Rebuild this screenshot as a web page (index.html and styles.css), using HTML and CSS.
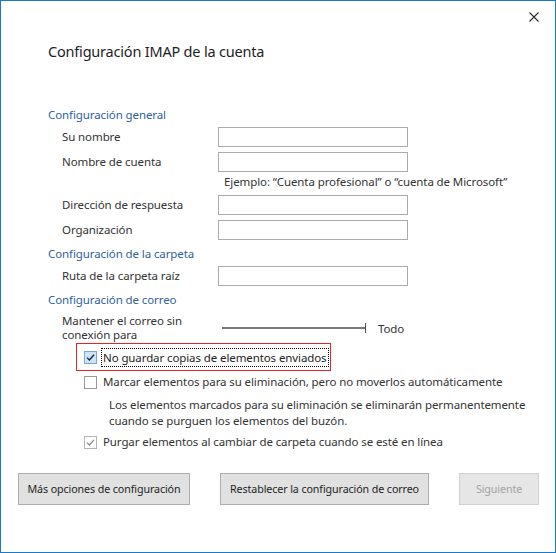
FILE: index.html
```html
<!DOCTYPE html>
<html lang="es">
<head>
<meta charset="utf-8">
<title>Configuración IMAP de la cuenta</title>
<link rel="stylesheet" href="styles.css">
</head>
<body>
<div class="dialog">
  <div class="titlebar">
    <button class="close" aria-label="Cerrar">
      <svg width="10" height="10" viewBox="0 0 10 10"><path d="M0.5 0.5L9.5 9.5M9.5 0.5L0.5 9.5" stroke="#2b2b2b" stroke-width="1.1" fill="none"/></svg>
    </button>
  </div>
  <h1 class="title">Configuración IMAP de la cuenta</h1>

  <h2 class="section-head h-general">Configuración general</h2>
  <div class="row first"><label class="row-label">Su nombre</label><input class="field" type="text"></div>
  <div class="row"><label class="row-label">Nombre de cuenta</label><input class="field" type="text"></div>
  <p class="hint">Ejemplo: “Cuenta profesional” o “cuenta de Microsoft”</p>
  <div class="row row-after-hint"><label class="row-label">Dirección de respuesta</label><input class="field" type="text"></div>
  <div class="row"><label class="row-label">Organización</label><input class="field" type="text"></div>

  <h2 class="section-head h-next">Configuración de la carpeta</h2>
  <div class="row first"><label class="row-label">Ruta de la carpeta raíz</label><input class="field" type="text"></div>

  <h2 class="section-head h-next">Configuración de correo</h2>
  <div class="offline">
    <div class="offline-label">Mantener el correo sin<br>conexión para</div>
    <div class="slider"><span class="track"></span><span class="tick"></span><span class="slider-value">Todo</span></div>
  </div>

  <div class="highlight">
    <span class="cb cb-focus">
      <svg width="11" height="11" viewBox="0 0 11 11"><path d="M2 5.6L4.4 8L9 2.8" stroke="#222" stroke-width="1.3" fill="none"/></svg>
    </span>
    <span class="focus-label">No guardar copias de elementos enviados</span>
  </div>

  <div class="check-row cr-mark">
    <span class="cb"></span>
    <span class="check-text">Marcar elementos para su eliminación, pero no moverlos automáticamente</span>
  </div>
  <p class="desc">Los elementos marcados para su eliminación se eliminarán permanentemente<br>cuando se purguen los elementos del buzón.</p>
  <div class="check-row cr-purge">
    <span class="cb cb-gray">
      <svg width="11" height="11" viewBox="0 0 11 11"><path d="M2 5.6L4.4 8L9 2.8" stroke="#8a8a8a" stroke-width="1.2" fill="none"/></svg>
    </span>
    <span class="check-text">Purgar elementos al cambiar de carpeta cuando se esté en línea</span>
  </div>

  <div class="actions">
    <button class="btn btn-more">Más opciones de configuración</button>
    <button class="btn btn-reset">Restablecer la configuración de correo</button>
    <button class="btn btn-next" disabled>Siguiente</button>
  </div>
</div>
</body>
</html>
```

FILE: styles.css
```css
* { box-sizing: border-box; }
html, body { margin: 0; padding: 0; background: #fff; }
body {
  font-family: "Noto Sans", "Open Sans", sans-serif;
  font-size: 11.5px;
  letter-spacing: -0.1px;
  color: #333;
}
.dialog {
  width: 556px;
  height: 553px;
  border: 1px solid #1979ca;
  background: #fff;
  display: flex;
  flex-direction: column;
}
.titlebar {
  height: 31px;
  display: flex;
  justify-content: flex-end;
  align-items: center;
  padding-right: 16px;
}
.close {
  width: 10px;
  height: 10px;
  border: 0;
  padding: 0;
  background: none;
  display: flex;
}
.title {
  margin: 9px 0 0 47px;
  font-size: 14.5px;
  letter-spacing: -0.2px;
  font-weight: normal;
  line-height: 21px;
  color: #1e1e1e;
}
.section-head {
  margin: 0 0 0 47px;
  font-size: 11.5px;
  font-weight: normal;
  line-height: 16px;
  color: #2f5f9e;
}
.h-general { margin-top: 45px; }
.h-next { margin-top: 6px; }
.row {
  display: flex;
  align-items: center;
  height: 20px;
  margin: 5px 0 0 61px;
}
.row.first { margin-top: 4px; }
.row.row-after-hint { margin-top: 5px; }
.row-label {
  width: 156px;
  line-height: 16px;
}
.field {
  width: 190px;
  height: 20px;
  margin: 0;
  border: 1px solid #ababab;
  background: #fff;
  outline: none;
}
.hint {
  margin: 2px 0 0 223px;
  line-height: 16px;
}
.offline {
  display: flex;
  margin: 6px 0 0 61px;
}
.offline-label {
  width: 156px;
  line-height: 14px;
}
.slider {
  display: flex;
  align-items: center;
  margin-left: 4px;
}
.track {
  width: 143px;
  height: 2px;
  background: #7a7a7a;
}
.tick {
  width: 1px;
  height: 10px;
  background: #555;
}
.slider-value {
  margin-left: 12px;
  color: #333;
}
.highlight {
  margin: 1px 0 0 75px;
  width: 255px;
  height: 28px;
  border: 1px solid #e0262b;
  display: flex;
  align-items: center;
  padding-left: 7px;
}
.cb {
  width: 13px;
  height: 13px;
  border: 1px solid #999;
  background: #fff;
  display: flex;
  align-items: center;
  justify-content: center;
  flex: none;
}
.cb-focus {
  border-color: #7aa7d6;
  background: #cce4f7;
}
.cb-gray { border-color: #b4b4b4; }
.focus-label {
  margin-left: 4px;
  height: 19px;
  padding: 0 1px;
  border: 1px dotted #000;
  line-height: 17px;
  color: #222;
  white-space: nowrap;
}
.check-row {
  display: flex;
  align-items: center;
  margin-left: 83px;
  height: 16px;
}
.cr-mark { margin-top: 3px; }
.cr-purge { margin-top: 5px; }
.check-text {
  margin-left: 6px;
  line-height: 16px;
  white-space: nowrap;
}
.desc {
  margin: 7px 0 0 108px;
  line-height: 16px;
}
.actions {
  display: flex;
  justify-content: space-between;
  padding: 0 16px 0 17px;
  margin-top: 23px;
}
.btn {
  height: 32px;
  margin: 0;
  padding: 0;
  border: 1px solid #adadad;
  background: #e1e1e1;
  font-family: inherit;
  font-size: 10.7px;
  letter-spacing: -0.1px;
  color: #1e1e1e;
  white-space: nowrap;
}
.btn-more { width: 172px; }
.btn-reset { width: 209px; }
.btn-next {
  width: 80px;
  border-color: #d0d0d0;
  background: #e6e6e6;
  color: #a3a3a3;
}
```
